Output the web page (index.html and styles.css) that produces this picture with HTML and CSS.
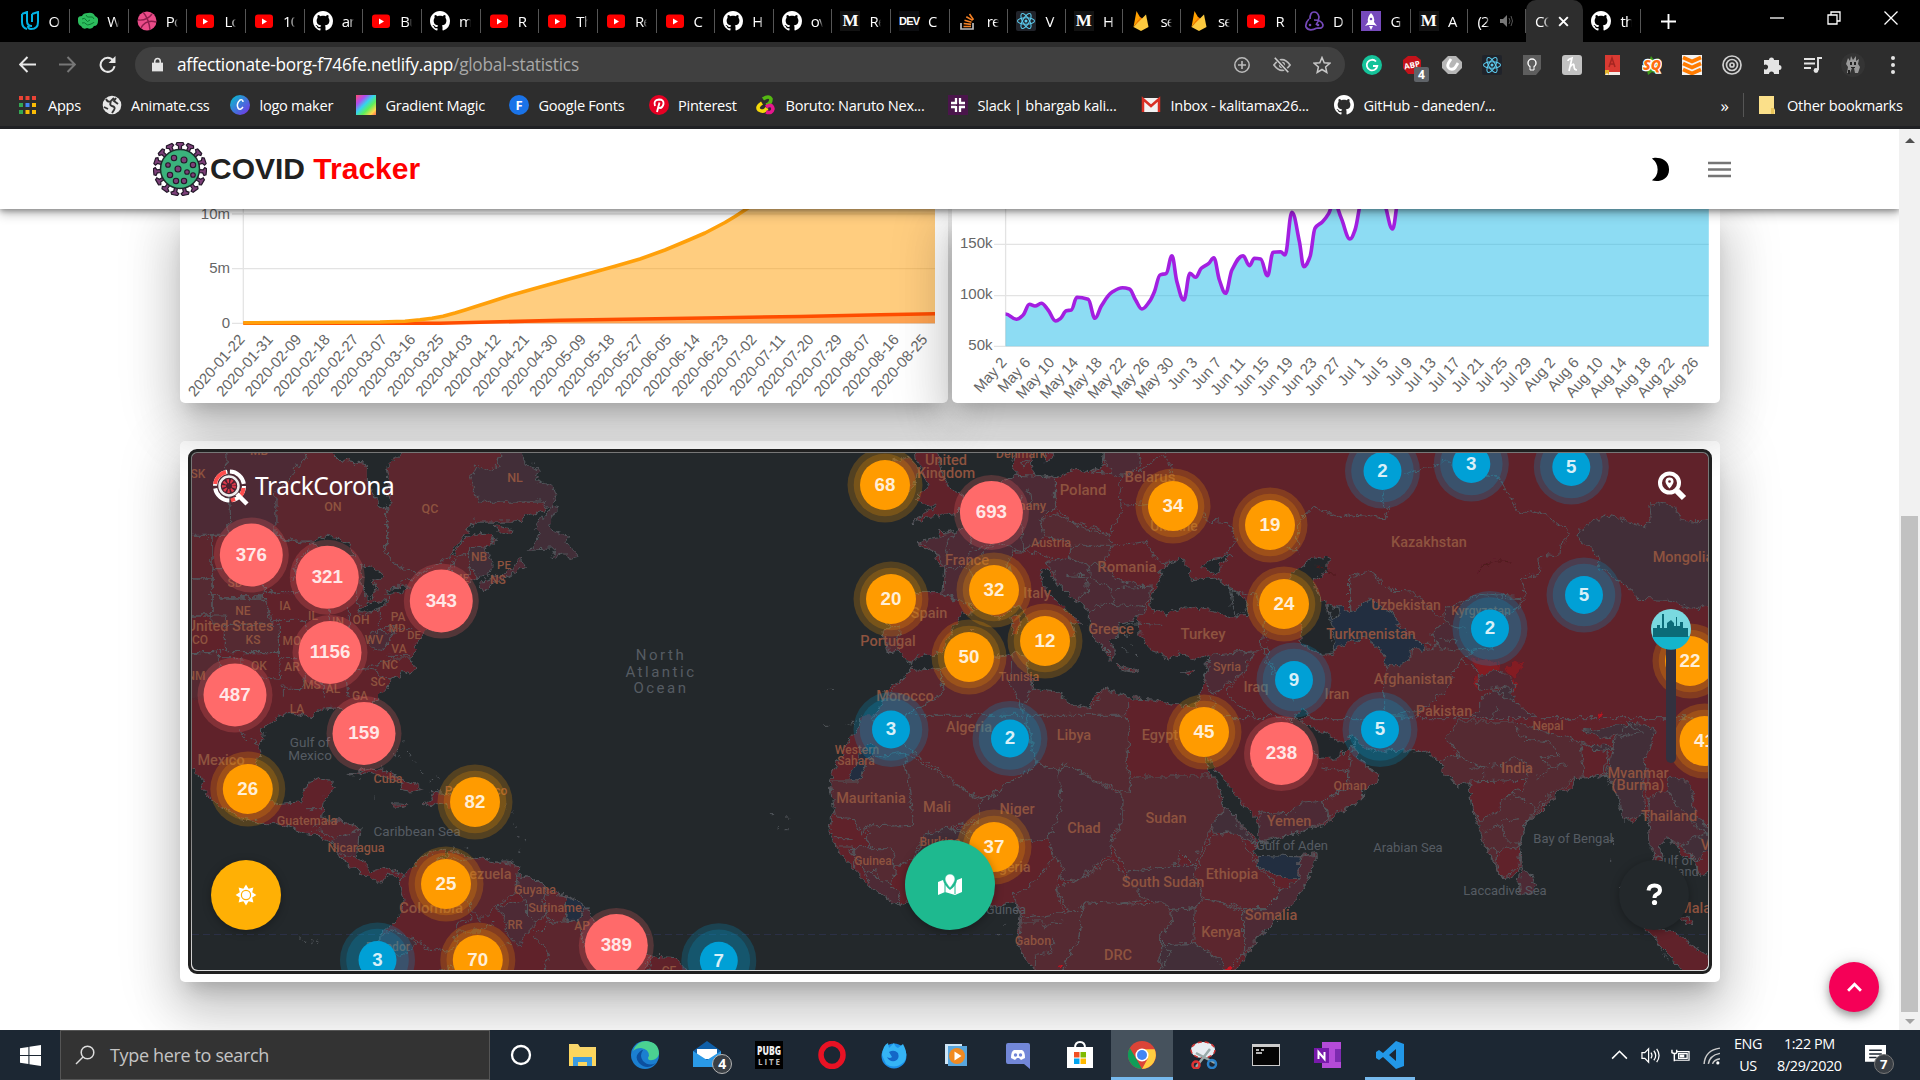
FILE: index.html
```html
<!DOCTYPE html>
<html lang="en">
<head>
<meta charset="utf-8">
<title>COVID Tracker</title>
<link rel="stylesheet" href="styles.css">
</head>
<body>
<svg class="sprite" aria-hidden="true">
  <symbol id="udacity" viewBox="0 0 20 20"><path d="M2 3v8q0 6 5 7M2 3l5-2v9q0 5 5 5M12 3l6-2v10q0 7-7 7-3 0-3-3M12 3v8" fill="none" stroke="#02b3e4" stroke-width="2"/></symbol>
  <symbol id="brain" viewBox="0 0 20 20"><path d="M0 10q-1-5 4-5 1-3 6-3 5-1 7 3 4 2 3 5 0 5-4 5-2 4-7 2-4 2-6-2-3-1-3-5z" fill="#2dbd5e"/><path d="M4 8q3-2 4 1t4 0 M8 4q1 3 4 2t4 2M4 12q3-1 4 1t5 0 3-2" fill="none" stroke="#0b7b32" stroke-width="1"/></symbol>
  <symbol id="dribbble" viewBox="0 0 20 20"><circle cx="10" cy="10" r="9.500" fill="#ea4c89"/><path d="M1 9q9 1 14-6M6 1q6 7 7 18M4 17q5-9 15-6" fill="none" stroke="#8d1d4c" stroke-width="1.400"/></symbol>
  <symbol id="yt" viewBox="0 0 20 20"><rect x="1" y="3.500" width="18" height="13.500" rx="3" fill="#f00"/><path d="M8 7.500l5 3-5 3z" fill="#fff"/></symbol>
  <symbol id="github" viewBox="0 0 16 16"><path fill="#fff" d="M8 0C3.580 0 0 3.580 0 8c0 3.540 2.290 6.530 5.470 7.590.4.070.55-.17.55-.38 0-.19-.01-.82-.01-1.490-2.010.37-2.530-.49-2.690-.94-.09-.23-.48-.94-.82-1.130-.28-.15-.68-.52-.01-.53.63-.01 1.080.58 1.230.82.72 1.210 1.870.87 2.330.66.070-.52.28-.87.51-1.070-1.780-.2-3.640-.89-3.640-3.950 0-.87.31-1.590.82-2.150-.08-.2-.36-1.020.08-2.120 0 0 .67-.21 2.200.82.64-.18 1.320-.27 2-.27s1.360.09 2 .27c1.530-1.040 2.200-.82 2.200-.82.44 1.100.16 1.920.08 2.120.51.56.82 1.270.82 2.150 0 3.070-1.870 3.750-3.650 3.950.29.25.54.73.54 1.480 0 1.070-.01 1.930-.01 2.200 0 .21.15.46.55.38A8.010 8.010 0 0 0 16 8c0-4.420-3.580-8-8-8z"/></symbol>
  <symbol id="so" viewBox="0 0 20 20"><path d="M3 12v6h12v-6" fill="none" stroke="#bcbbbb" stroke-width="1.700"/><path d="M5.500 15.500h7.500M5.700 12.500l7.400.9M6.500 9.200l7 2M8.300 5.700l6.300 3.700M11.500 3l4 5.800" stroke="#f48024" stroke-width="1.600"/></symbol>
  <symbol id="react" viewBox="0 0 20 20"><rect width="20" height="20" rx="2" fill="#20232a"/><g fill="none" stroke="#5ccbee" stroke-width="1.100"><ellipse cx="10" cy="10" rx="8.500" ry="3.300"/><ellipse cx="10" cy="10" rx="8.500" ry="3.300" transform="rotate(60 10 10)"/><ellipse cx="10" cy="10" rx="8.500" ry="3.300" transform="rotate(120 10 10)"/></g><circle cx="10" cy="10" r="1.500" fill="#5ccbee"/></symbol>
  <symbol id="firebase" viewBox="0 0 20 20"><path d="M2.500 16L5.500 0l4 7z" fill="#ffa000"/><path d="M2.500 16L9.500 6l3 3z" fill="#f57c00"/><path d="M2.500 16L15 3.500l2.500 12.500-7.500 4z" fill="#fcca3f"/></symbol>
  <symbol id="redux" viewBox="0 0 20 20"><g fill="none" stroke="#764abc" stroke-width="1.700"><path d="M6 8q0-7 4-7t5 5q0 4-3 8M5 8q-4 4-3 8 3 5 11 1M13 17q6 1 6-3-1-5-9-5"/></g><circle cx="6" cy="14" r="1.300" fill="#764abc"/><circle cx="14" cy="14" r="1.300" fill="#764abc"/></symbol>
  <symbol id="rocket" viewBox="0 0 20 20"><path fill="#764abc" d="M0 0h20v20H0z"/><path d="M10 2q4 4 3 9l3 4-3-1H7l-3 1 3-4q-1-5 3-9zM8 15h4l-2 4z" fill="#fff"/><circle cx="10" cy="8" r="1.300" fill="#764abc"/></symbol>
  <symbol id="chrome" viewBox="0 0 24 24"><circle cx="12" cy="12" r="12" fill="#db4437"/><path d="M1.600 6L8 17l4 7A12 12 0 0 1 1.600 6z" fill="#0f9d58"/><path d="M12 7h10.800A12 12 0 0 1 12 24l5-9z" fill="#ffcd40"/><circle cx="12" cy="12" r="5.600" fill="#fff"/><circle cx="12" cy="12" r="4.300" fill="#4285f4"/></symbol>
</svg>

<header class="tabs">
  <div class="tab"><svg><use href="#udacity"/></svg><span>O</span></div>
  <div class="tab"><svg><use href="#brain"/></svg><span>W</span></div>
  <div class="tab"><svg><use href="#dribbble"/></svg><span>Po</span></div>
  <div class="tab"><svg><use href="#yt"/></svg><span>Lo</span></div>
  <div class="tab"><svg><use href="#yt"/></svg><span>10</span></div>
  <div class="tab"><svg><use href="#github"/></svg><span>an</span></div>
  <div class="tab"><svg><use href="#yt"/></svg><span>Bu</span></div>
  <div class="tab"><svg><use href="#github"/></svg><span>m</span></div>
  <div class="tab"><svg><use href="#yt"/></svg><span>R</span></div>
  <div class="tab"><svg><use href="#yt"/></svg><span>Th</span></div>
  <div class="tab"><svg><use href="#yt"/></svg><span>Re</span></div>
  <div class="tab"><svg><use href="#yt"/></svg><span>C</span></div>
  <div class="tab"><svg><use href="#github"/></svg><span>H</span></div>
  <div class="tab"><svg><use href="#github"/></svg><span>ov</span></div>
  <div class="tab"><b class="fav medium">M</b><span>Re</span></div>
  <div class="tab"><b class="fav dev">DEV</b><span>C</span></div>
  <div class="tab"><svg><use href="#so"/></svg><span>re</span></div>
  <div class="tab"><svg><use href="#react"/></svg><span>V</span></div>
  <div class="tab"><b class="fav medium">M</b><span>H</span></div>
  <div class="tab"><svg><use href="#firebase"/></svg><span>se</span></div>
  <div class="tab"><svg><use href="#firebase"/></svg><span>se</span></div>
  <div class="tab"><svg><use href="#yt"/></svg><span>R</span></div>
  <div class="tab"><svg><use href="#redux"/></svg><span>D</span></div>
  <div class="tab"><svg><use href="#rocket"/></svg><span>G</span></div>
  <div class="tab"><b class="fav medium">M</b><span>A</span></div>
  <div class="tab sound"><span>(2)</span><svg viewBox="0 0 14 14"><path d="M1 5h3l4-4v12L4 9H1z" fill="#777"/><path d="M10 4q2 3 0 6M12 2q3 5 0 10" fill="none" stroke="#555"/></svg></div>
  <div class="tab active"><span>CO</span><svg viewBox="0 0 12 12"><path d="M2 2l8 8M10 2l-8 8" stroke="#fff" stroke-width="1.800"/></svg></div>
  <div class="tab"><svg><use href="#github"/></svg><span>th</span></div>
  <div class="new-tab"><svg viewBox="0 0 16 16"><path d="M8 0v16M0 8h16" stroke="#fff" stroke-width="2"/></svg></div>
  <div class="window-buttons">
    <svg viewBox="0 0 14 14"><path d="M0 7h14" stroke="#fff" stroke-width="1.300"/></svg>
    <svg viewBox="0 0 14 14"><path d="M1 4h9v9H1zM4 4V1h9v9h-3" fill="none" stroke="#fff" stroke-width="1.300"/></svg>
    <svg viewBox="0 0 14 14"><path d="M.5.5l13 13M13.500.5l-13 13" stroke="#fff" stroke-width="1.300"/></svg>
  </div>
</header>

<div class="toolbar">
  <div class="nav-buttons">
    <svg viewBox="0 0 16 16"><path d="M16 8H1M8 1L1 8l7 7" fill="none" stroke="#e8e8e8" stroke-width="1.900"/></svg>
    <svg viewBox="0 0 16 16"><path d="M0 8h15M8 1l7 7-7 7" fill="none" stroke="#777" stroke-width="1.900"/></svg>
    <svg viewBox="0 0 16 16"><path d="M13.500 4.500A6.600 6.600 0 1 0 14.600 9.500" fill="none" stroke="#e8e8e8" stroke-width="1.900"/><path d="M15.500 0v6.500H9z" fill="#e8e8e8"/></svg>
  </div>
  <div class="omnibox">
    <svg class="lock" viewBox="0 0 12 15"><path d="M0 5.500h12V15H0z" fill="#e3e3e3"/><path d="M3 6V4a3 3 0 0 1 6 0v2" fill="none" stroke="#e3e3e3" stroke-width="1.700"/></svg>
    <p class="url">affectionate-borg-f746fe.netlify.app<span>/global-statistics</span></p>
    <div class="omni-actions">
      <svg viewBox="0 0 18 18"><circle cx="9" cy="9" r="7.200" fill="none" stroke="#bbb" stroke-width="1.500"/><path d="M9 5v8M5 9h8" stroke="#bbb" stroke-width="1.600"/></svg>
      <svg viewBox="0 0 20 18"><path d="M1 9q9-12 18 0-9 12-18 0z" fill="none" stroke="#bbb" stroke-width="1.900"/><circle cx="10" cy="9" r="3.500" fill="#bbb"/><path d="M3 1l14 16" stroke="#404040" stroke-width="4"/><path d="M2 1l15 16" stroke="#ccc" stroke-width="1.800"/></svg>
      <svg viewBox="0 0 18 18"><path d="M9 1.500l2.200 5.200 5.600.5-4.200 3.700 1.200 5.500L9 13.500l-4.800 2.900 1.200-5.500L1.200 7.200l5.600-.5z" fill="none" stroke="#c8c8c8" stroke-width="1.500"/></svg>
    </div>
  </div>
  <div class="extensions">
    <svg viewBox="0 0 20 20"><circle cx="10" cy="10" r="10" fill="#15c39a"/><path d="M14 6.500A5.300 5.300 0 1 0 15.300 11H11" fill="none" stroke="#fff" stroke-width="1.800"/></svg>
    <div class="ext-badge"><svg viewBox="0 0 20 20"><path d="M6 1h8l5 4v8l-5 6H6l-5-6V5z" fill="#c4121a"/><text x="10" y="13" text-anchor="middle" font-size="8" font-weight="700" fill="#fff" transform="rotate(-12 10 10)">ABP</text></svg><b>4</b></div>
    <svg viewBox="0 0 20 20"><path d="M6 1h8l6 6v6l-6 6H6l-6-6V7z" fill="#b6b6b6"/><path d="M9 4L6.500 8q-2 4 1.500 6 4 1 5.500-2L16 8" fill="none" stroke="#fff" stroke-width="2.800"/></svg>
    <svg><use href="#react"/></svg>
    <svg viewBox="0 0 20 20"><path d="M1 0h18v14l-5 6H1z" fill="#5e5e5e"/><circle cx="10" cy="8" r="4" fill="none" stroke="#fff" stroke-width="1.400"/><path d="M8 11v4h4v-4" fill="#5e5e5e" stroke="#fff"/></svg>
    <svg viewBox="0 0 20 20"><rect width="20" height="20" rx="3" fill="#c2c2c2"/><path d="M7 16q2-8 3-13-4 1-4 3M8 12q4-5 4-1t3 4" fill="none" stroke="#fff" stroke-width="1.700"/></svg>
    <svg viewBox="0 0 20 20"><path d="M3 0h15v17H3z" fill="#d93a32"/><path d="M3 17h15v3H3z" fill="#f3eee8"/><path d="M7 12l3-9 3 9M8 9h4" fill="none" stroke="#a32520" stroke-width="1.500"/><path d="M3 15h4v5l-2-2-2 2z" fill="#e3b32e"/></svg>
    <svg viewBox="0 0 20 20"><path d="M4 4l3 2 2-5 3 4 5-2-1 6 3 3-4 2v5l-5-2-4 3-1-5-4-2 3-4z" fill="#3d9b1d"/><text x="10" y="15" text-anchor="middle" font-size="14" font-weight="800" font-style="italic" fill="#ff6d10" stroke="#fff" stroke-width="2.500" paint-order="stroke">SQ</text></svg>
    <svg viewBox="0 0 20 20"><path d="M0 0h20v20H0z" fill="#f3f3f3"/><path d="M1 2.500l9 4 9-4M1 8.500l9 4 9-4M1 14.500l9 4 9-4" fill="none" stroke="#ff7b00" stroke-width="3.600"/></svg>
    <svg viewBox="0 0 20 20" fill="none" stroke="#cfcfcf" stroke-width="1.700"><circle cx="10" cy="10" r="9"/><circle cx="10" cy="10" r="5.500"/><circle cx="10" cy="10" r="2"/></svg>
    <svg viewBox="0 0 20 20"><path d="M2 5h5a2.500 2.500 0 1 1 5 0h5v5a2.500 2.500 0 1 1 0 5v4h-5a2.500 2.500 0 1 0-5 0H2v-5a2.500 2.500 0 1 0 0-4z" fill="#e4e4e4"/></svg>
    <svg viewBox="0 0 20 20"><path d="M1 4h11M1 8.500h11M1 13h7" stroke="#e4e4e4" stroke-width="1.800"/><path d="M15 15V3h4" fill="none" stroke="#e4e4e4" stroke-width="1.900"/><circle cx="13" cy="15.500" r="2.400" fill="#e4e4e4"/></svg>
    <svg class="avatar" viewBox="0 0 24 24"><circle cx="12" cy="12" r="12" fill="#343434"/><path d="M7 5l2 3 1-5 2 4 3-4v5l3-2-1 5 2 3-2 6h-3l-1-5h-2l-2 5H6l1-6-2-3z" fill="#999"/><path d="M9 9h2v3H9zM13 9h2v3h-2zM10 14h4v1h-4zM7 17h2v4H7z" fill="#222"/></svg>
    <svg viewBox="0 0 20 20"><circle cx="10" cy="3" r="2" fill="#e4e4e4"/><circle cx="10" cy="10" r="2" fill="#e4e4e4"/><circle cx="10" cy="17" r="2" fill="#e4e4e4"/></svg>
  </div>
</div>

<div class="bookmarks">
  <div class="bookmark"><svg viewBox="0 0 17 18"><path d="M0 0h4v4H0zM6.500 0h4v4h-4zM13 0h4v4h-4z" fill="#ea4335"/><path d="M0 7h4v4H0zM0 14h4v4H0z" fill="#34a853"/><path d="M6.500 7h4v4h-4z" fill="#4285f4"/><path d="M13 7h4v4h-4zM6.500 14h4v4h-4zM13 14h4v4h-4z" fill="#fbbc05"/></svg><span>Apps</span></div>
  <div class="bookmark"><svg viewBox="0 0 20 20"><circle cx="10" cy="10" r="9.300" fill="#e8e8e8"/><path d="M4 4q2 4 5 2l3-3M9 7q-2 3 1 4 4 1 2 4l-2 3M2 12l4 2M14 3l-2 3 4 3" fill="none" stroke="#333" stroke-width="1.900"/></svg><span>Animate.css</span></div>
  <div class="bookmark"><svg viewBox="0 0 20 20"><defs><linearGradient id="cv" x2="1" y2="1"><stop stop-color="#00c4cc"/><stop offset="1" stop-color="#7d2ae8"/></linearGradient></defs><circle cx="10" cy="10" r="10" fill="url(#cv)"/><path d="M13 7q0-3-3-2-4 4-2 8 2 3 5-1" fill="none" stroke="#fff" stroke-width="1.500"/></svg><span>logo maker</span></div>
  <div class="bookmark"><i class="fav rainbow"></i><span>Gradient Magic</span></div>
  <div class="bookmark"><b class="fav gfonts">F</b><span>Google Fonts</span></div>
  <div class="bookmark"><svg viewBox="0 0 20 20"><circle cx="10" cy="10" r="10" fill="#e60023"/><path d="M6 11q-2-6 4-6.500 5 0 4.500 4.500-1 4-3.500 4-1.500 0-2-1.500M10.500 7.500L8 17" fill="none" stroke="#fff" stroke-width="1.900"/></svg><span>Pinterest</span></div>
  <div class="bookmark"><svg viewBox="0 0 20 20" fill="none" stroke-width="3.600"><path d="M7 4q6-4 8 0 0 5-5 6" stroke="#54b812"/><path d="M6 8q-6 4-3 7 5 3 8-2" stroke="#f5d90a"/><path d="M10 12q6-4 7 2-1 5-7 3" stroke="#e6168e"/></svg><span>Boruto: Naruto Nex...</span></div>
  <div class="bookmark"><svg viewBox="0 0 20 20"><path d="M0 0h20v20H0z" fill="#4a154b"/><path d="M8 3v6M3 8h6M12 3v5M11 8h6M8 11v6M3 12h5M12 11v6M11 12h6" stroke="#fff" stroke-width="2.300"/></svg><span>Slack | bhargab kali...</span></div>
  <div class="bookmark"><svg viewBox="0 0 20 20"><path d="M1 3h18v14H1z" fill="#f2f2f2"/><path d="M2 17V4l8 7 8-7v13" fill="none" stroke="#d93025" stroke-width="2.500"/></svg><span>Inbox - kalitamax26...</span></div>
  <div class="bookmark"><svg><use href="#github"/></svg><span>GitHub - daneden/...</span></div>
  <div class="bookmark more"><span>»</span></div>
  <div class="bookmark other"><svg viewBox="0 0 16 18"><path d="M0 0h15v12l1 2v4H0z" fill="#fbe08a"/><path d="M12 12h3v6h-3z" fill="#eac55a"/></svg><span>Other bookmarks</span></div>
</div>

<div class="viewport">
  <div class="page">
    <nav class="navbar">
      <svg class="virus" viewBox="-27 -27 54 54"><g id="spikes" fill="#7c3f78" stroke="#24182a" stroke-width="1.200"></g><circle r="19.500" fill="#3bb27c" stroke="#1d2b2a" stroke-width="1.500"/><g fill="#7c3f78" stroke="#24182a" stroke-width="1.100"><circle cx="-6" cy="-11" r="2.700"/><circle cx="4" cy="-9" r="3"/><circle cx="-12" cy="-4" r="2.300"/><circle cx="-2" cy="0" r="3"/><circle cx="13" cy="-4" r="2.700"/><circle cx="7" cy="3" r="2.300"/><circle cx="-10" cy="6" r="2.700"/><circle cx="13" cy="6" r="2.300"/><circle cx="-4" cy="12" r="2.700"/><circle cx="4" cy="12" r="2.700"/></g></svg>
      <h1>COVID <span>Tracker</span></h1>
      <svg class="moon" viewBox="0 0 20 26"><path d="M1 1.500C5-.5 19 1 19 13S6 26.500 1 24.300Q7 20 7 13T1 1.500z" fill="#000"/></svg>
      <svg class="menu" viewBox="0 0 23 16"><path d="M0 1.500h23M0 8h23M0 14.500h23" stroke="#757575" stroke-width="2.400"/></svg>
    </nav>
    <div class="charts">
      <svg class="card" id="totals" viewBox="180 209 768 194"></svg>
      <svg class="card" id="daily" viewBox="952 209 768 194"></svg>
    </div>
    <section class="map-card">
      <div class="embed">
        <svg class="map" viewBox="192 453 1516 517">
          <defs><filter id="rough" x="0" y="0" width="1" height="1"><feTurbulence baseFrequency=".09" numOctaves="3" seed="4" result="n"/><feDisplacementMap in="SourceGraphic" in2="n" scale="8" xChannelSelector="R" yChannelSelector="G"/></filter></defs>
          <rect x="192" y="453" width="1516" height="517" fill="#23282b"/>
          <path d="M192 934.500h1516" stroke="#2b3046" stroke-dasharray="7 4"/>
          <g filter="url(#rough)"><rect x="185" y="445" width="1530" height="535" fill="none"/>
          <g class="land" transform="translate(180 440) scale(.33333)">
            <path class="c1" d="M20 800V20H440L480 60 553 70 553 120 575 170 600 195 628 205 630 180 612 150 622 120 612 80 665 55 672 20H960L950 75 1000 110 950 180H1090V205L1010 240H880L860 270 820 310 795 352 820 335 840 300 875 280 935 275 942 300 915 312 925 395 885 412 850 430 800 520 750 560 722 575 700 605 700 640 685 650 702 675 690 690 650 705 630 715 600 750 580 780V800"/>
            <path class="c4" d="M20 20H134L145 280H20z"/><path class="c4" d="M134 20H390L282 160V280H145z"/>
            <path class="c2" d="M282 160L390 20H440L480 60 553 70V120L600 195 614 205V330L632 362 690 392H722L640 440 600 500 540 520 500 380 440 300 340 300 282 280z"/>
            <path class="c2" d="M614 205L630 180 612 80 672 20H960L950 75 870 110 890 170 940 190 950 180H1090V205L1010 240H880L795 352 722 392H690L632 362 614 330z"/>
            <path class="c5" d="M865 110L885 70 905 90 950 75 960 20H1015L1030 70 1060 75 1085 90 1060 110 1110 130 1122 160 1110 195 1090 200V180H950L935 195 920 175 895 185 875 140z"/>
            <path class="c2" d="M20 280H90V408H20zM90 380H250V468H90z"/><path class="c3" d="M20 408H90V522H20zM90 468H250L270 550H90zM130 550H292V632H130zM20 632H112V800H20z"/>
            <path class="c4" d="M560 590L592 560 610 575 640 565 600 625 575 620z"/>
            <path class="c5" d="M862 320L915 314 930 370 925 395 885 410 862 370z"/><path class="c2" d="M805 390L820 345 862 330V400L840 430z"/>
            <path class="c5" d="M1110 195L1130 200 1100 250 1110 265 1160 280 1150 300 1180 320 1185 350 1165 355 1150 335 1110 350 1120 320 1045 325 1075 280 1060 265 1085 225z"/>
            <path class="c4" d="M897 430L910 415 960 400 1000 375 1015 345 1030 375 985 400 930 430 905 450z"/><path class="c2" d="M935 250L990 265 985 280 950 268z"/>
            <path class="sea" d="M390 305L430 285 470 290 500 310 520 340 440 340zM535 375L570 372 605 400 600 415 575 410 585 440 560 480 545 440zM530 505L560 485 622 475 600 495 560 508zM610 450L640 437 685 435 675 450 620 458z"/>
            <path class="line" d="M90 280V522M20 408H90M90 380H250V468M90 468H240L270 520 275 560M20 522H130V632M130 550H250M20 632H292M292 560V632L296 715M112 632V647H177V700L296 715M250 452H360M275 535H370L385 600 400 640M442 500V700M502 500V600L440 650M592 495V560H690M296 650H380L360 740 304 738V800M424 700V790M490 690L500 780M424 690H520L640 648H690M540 685L580 690 630 715M282 280L330 300 390 305M330 420L350 350 390 320M614 640H690M600 625L640 570"/>
          </g>
          <g class="land" transform="translate(180 700) scale(.3827 .33333)">
            <path class="c1" d="M500-10L505 20 470 100 440 30 400 18 360 22 340 50 300 35 270 35 240 55 215 80 205 135 200 190 190 230 200 290 245 305 310 300 330 245 360 232 398 235 395 260 375 290 370 350 430 360 465 380 455 465 475 480 500 510 540 500 575 520 578 545 555 515 535 515 515 548 490 520 470 520 455 500 425 480 415 455 385 415 355 405 300 385 250 365 220 365 150 350 75 290 50 260 55 230 10 185V-10"/>
            <path class="c4" d="M400 410L465 380 455 465 425 460 388 418z"/><path class="c2" d="M355 385L375 362 430 360 465 380 400 410 380 395z"/>
            <path class="c1" d="M440 220L480 200 530 205 575 235 630 262 600 270 570 265 575 250 530 225 490 210zM555 305L595 308 590 318 560 315zM630 305L650 295 655 270 690 275 730 300 700 320 680 310 660 312z"/>
            <path class="line" d="M560 150l10 20M575 115l8 12M590 145l8 15M605 180l8 12M625 205l10 10M650 240l8-8M665 225l8 8M845 310l4 12M862 325v10M870 370v8M880 405v8M905 420v5M880 440l-4 12M710 435l6 12M740 440l4 8M800 470h8M470 225l3 10M500 285h4M1540 335h6M1558 375v12M310 705l14 18M335 722h6M350 715l3 5M320 320H370M330 395L355 365M200 130L170 110 150 80"/>
            <path class="c1" d="M520 820L515 740 525 690 550 665 575 635 580 600 570 540 600 500 625 465 685 438 690 455 665 480 690 475 700 445 760 470 800 480 850 480 880 490 875 520 905 525 950 560 1000 580 1045 600 1060 615 1070 650 1100 690 1225 765 1290 770 1330 820"/>
            <path class="c2" d="M665 480L760 470 880 490 875 565 820 615 780 660 750 600 690 580z"/>
            <path class="c4" d="M880 530L905 525 950 560 940 595 955 640 925 665 900 640 895 595 875 565z"/><path class="c2" d="M945 575L1000 580 1010 600 1000 655 955 660z"/><path class="c6" d="M1005 585L1045 600 1060 615 1035 655 1003 655z"/>
            <path class="c4" d="M820 615L900 595 900 640 930 665 900 700 880 735 840 690 850 665z"/><path class="c4" d="M1035 655L1060 615 1070 650 1095 690 1050 730z"/>
            <path class="c5" d="M545 680L600 710 610 730 580 760 520 770 515 720z"/>
            <path class="c2" d="M960 665L1035 655 1050 730 1090 700 1225 765 1200 820H940L965 750 920 710z"/>
            <path class="line" d="M750 600L755 650 715 670 720 740 690 750 640 740 600 705M720 690L780 690 820 660M665 810L720 795 860 720M1215 810L1230 770"/>
          </g>
          <g class="land" transform="translate(780 440) scale(.33333)">
            <path class="c1" d="M240 860L290 810 300 790 320 740 370 705 385 680 390 662 368 650 350 625 320 635 308 590 325 560 295 470 318 445 400 452 480 452 485 380 460 350 465 330 420 320 405 300 480 290 470 265 505 285 520 270 545 255 600 200 640 140 690 125 715 105 690 80 700 20H2850V860"/>
            <path class="c4" d="M405 300L480 285 520 270 560 250 700 320 680 360 690 440 600 490 545 485 485 460 490 380 465 330z"/>
            <path class="c4" d="M640 140L700 100 820 105 822 190 775 235 790 290 725 330 640 300 590 240 600 200z"/>
            <path class="c3" d="M775 235L825 215 900 260 985 280 990 310 920 370 870 345 865 300 790 290z"/>
            <path class="c4" d="M800 365L860 345 920 370 970 365 1000 410 1110 440 1095 500 1075 530 1010 545 1012 590 1000 655 960 615 925 570 925 510 880 475 830 430z"/>
            <path class="c3" d="M860 345L880 310 985 310 970 370 920 370z"/>
            <path class="c4" d="M962 20L965 60 1000 105 1040 100 1075 70 1070 20z"/>
            <path class="c3" d="M308 560H355L345 620 320 635z"/>
            <path class="c2" d="M240 860L300 790 385 680 475 680 485 755 370 820 360 860z"/><path class="c2" d="M475 680L690 635 715 800 760 860H360L370 820 485 755z"/>
            <path class="c4" d="M690 635L750 640 735 690 755 740 720 805 685 720z"/><path class="c3" d="M750 740L820 750 930 800 970 740 1040 770V860H720V805z"/>
            <path class="c4" d="M1280 640L1415 630 1390 690 1290 760 1270 730z"/>
            <path class="sea" d="M390 660L420 640 475 640 490 610 515 560 540 520 575 515 560 487 600 510 650 530 690 500 715 490 735 530 790 570 850 600 880 575 870 540 903 550 850 505 785 435 775 385 800 385 830 430 880 475 925 510 925 570 960 615 985 655 1000 640 985 600 1012 590 1010 545 1075 530 1065 550 1085 600 1110 625 1150 640 1160 655 1200 635 1240 655 1280 640 1278 680 1255 760 1240 795 1170 790 1125 775 1040 770 970 740 935 770 930 800 880 790 820 750 750 740 755 710 735 690 750 640 690 635 610 642 550 655 475 680 400 685 385 672z"/>
            <path class="sea" d="M1190 350L1150 372 1130 420 1105 480 1115 505 1155 518 1210 495 1290 505 1350 525 1398 520 1400 490 1365 450 1300 405 1255 410 1225 415 1222 380zM1255 375L1290 350 1350 340 1310 370 1320 385 1290 398zM745 20L750 80 760 105 800 100 825 105 880 85 925 95 960 75 965 20z"/>
            <path class="c1" d="M405 20L410 60 425 95 440 130 400 180 460 195 390 245 450 225 520 215 545 190 548 160 510 145 480 100 470 20z"/><path class="c3" d="M340 60L385 45 410 90 385 150 340 150z"/>
            <path class="c1" d="M690 530L715 520 712 575 695 580zM800 610L850 600 840 640zM935 90L960 72 995 80 990 95zM790 36L812 40 812 60 790 62zM720 60l20-5 2 15-20 5zM1012 672L1070 685 1068 690 1015 680zM1200 690L1238 682 1220 697zM570 560l14 2-8 8zM1020 580l20 4M1040 600l12 12M1060 640l10 10M1020 620l20 10M1030 550l15-5M1075 570l10 10"/>
            <path class="line" d="M820 105V190L865 240 985 275 1020 210 1010 160 1020 100M1040 100L1150 40 1170 90M1020 190L1100 185 1180 200M1265 215L1270 240 1340 245 1365 290 1330 340M990 310L1090 300 1130 360 1150 372M1000 440L1110 435M850 400L915 405 920 450 880 475M920 370L930 410 990 440 1000 490 950 490 925 510M1000 490L1090 500M725 330L720 250 640 140M690 330L725 330 810 345 800 370M480 452L545 485M640 300L560 330 570 420M490 380L560 380M560 250L570 310M520 270L500 300 490 340M640 300L600 340M640 200L700 190 720 160M740 140L750 190 800 210M700 220L680 270M415 460L320 460M1365 450L1420 460 1450 510 1440 620 1480 700M1140 550L1040 545M1390 690L1340 740V765L1430 830 1550 835M1280 765L1300 790 1250 860M145 742h8M130 850h15M210 850l10-15M190 853l15-5"/>
          </g>
          <g class="land" transform="translate(1230 440) scale(.33333)">
            <path class="c5" d="M1035 275L1080 240 1130 222 1240 255 1255 230 1250 200 1272 178 1330 200 1345 230 1380 240 1460 235V485L1390 505 1310 475 1215 472 1190 430 1130 395 1100 390V350L1085 320 1050 300z"/>
            <path class="c2" d="M353 405L410 390 455 425 480 448 550 450 580 480 620 530 650 500 700 505 640 540 600 575 615 610 578 610 520 570 475 510 410 475 353 515z"/>
            <path class="c3" d="M465 670L535 650 540 625 600 620 650 600 730 625 690 650 640 750 580 800 545 825H455V720z"/>
            <path class="c4" d="M640 500L740 460 865 470 860 495 800 540 790 620 700 630 620 620 600 575 640 540z"/>
            <path class="c6" d="M285 550L295 500 320 490 350 515 375 500 410 475 475 510 520 570 578 610 570 628 535 625 530 650 490 678 465 670 455 635 400 590 350 605 312 625 300 560z"/>
            <path class="sea" d="M200 380L250 345 292 350 290 385 245 420 260 470 285 490 300 560 312 635 275 640 205 605 210 560 170 480 160 420zM290 500L320 495 325 520 300 530zM-5 440L40 470 50 500 10 525zM185 820L215 800 245 840 260 880H220z"/>
            <path class="hot" d="M712 645L800 665 800 692 740 697zM825 680L850 660 872 668 868 690 850 710zM728 700h10v35h-8zM845 715h10v35h-8z"/><path class="c4" d="M738 700L822 692 850 720V750L800 735 740 745z"/>
            <path class="c5" d="M780 745L840 740 850 780 810 800zM1060 860L1120 865 1200 828 1240 860 1250 900H1060z"/><path class="c4" d="M740 780L790 745 860 785 910 830 890 870H660L740 810z"/>
            <path class="line" d="M165 320L200 330 200 240 240 195 330 230 380 220 460 230 470 200 445 180 460 150M520 100L640 60 700 100 795 100 865 220 890 205 950 225 1020 280 985 310 980 345 930 340 920 400 865 410 880 460 865 495 800 540M100 560L110 640 150 720 190 790M0 630L110 625M353 405V515M455 825L580 800M910 830L1000 865 1060 860M690 650L740 690M760 860L800 790M640 540L660 560 700 565M620 590L680 600"/>
            <path d="M735 390q30-45 100-30M735 395l5-10M250 370l60 30" fill="none" class="ridge"/>
            <circle cx="1104" cy="820" r="6" fill="#b81420"/>
          </g>
          <g class="land" transform="translate(1230 720) scale(.4415 .33333)">
            <path class="c1" d="M-60-10H1110V440L1060 460 1050 420 1020 400 1010 370 985 350 970 370 975 420 1000 520 985 500 960 440 945 310 935 275 910 300 890 300 880 240 865 200 850 160 775 170 770 195 740 215 700 270 665 300 652 370 655 430 640 460 615 470 600 440 575 380 560 305 545 270 540 200 535 175 510 195 480 150 475 120 460 110 435 85 340 90 300 80 280 40 275 70 300 130 330 155 328 180 298 205 298 230 275 250 210 305 110 350 65 365 55 290 30 260 0 200-60 100"/>
            <path class="c3" d="M480 150L475 115 510 100 490 50 510 0H640L790 60 850 90 830 165 775 170 740 215 665 300 652 370 615 470 575 380 545 270 540 180 510 195z"/>
            <path class="c1" d="M540 180L665 175V200L610 235V260L560 300 545 260zM600 390L655 370 650 430 615 470 598 420zM790 65L850 90 845 160 800 165z"/>
            <path class="c5" d="M865 60L900 0 960 20 940 100 930 180 935 275 890 300 870 200 850 160z"/><path class="c4" d="M940 230L985 210 1010 250 1070 300 1090 330 1020 370 985 350 970 370 975 420 950 380z"/>
            <path class="c5" d="M985 170L1020 170 1050 210 1040 250 1085 330 1110 360 1050 310 990 215zM815 70L860 75 855 88 820 85zM1020 370L1080 330 1090 380 1050 420z"/><path class="c5" d="M790 30L900 10 930 30 850 50z"/>
            <path class="c4" d="M65 270L130 275 160 240 205 235 220 290 180 318 110 350 65 365 58 340z"/><path class="c2" d="M205 235L262 200V150L275 75 300 130 330 155 328 180 298 205V230L275 250 220 285z"/>
            <path class="sea" d="M130-10H150L200 30 250 60 278 42 275 70 260 85 240 110 200 115 175 75 140 20z"/>
            <path class="c4" d="M655 437L675 450 688 490 680 510 655 515 650 480z"/><path class="c1" d="M920 600L1000 630 1040 670 1080 700 1085 760H1030L985 690zM1010 575L1048 600 1040 615z"/>
            <path class="line" d="M205 235L262 200V150L200 135M610 235L640 215 690 260 665 300M610 300L650 290M570 330L610 310 620 360 652 360M570 375L600 390M640 0L650 50 720 60 740 100 700 110 720 140 760 130M665 175L680 140 640 110 610 130 540 140M570 170V140L510 100M690 260L740 200M720 140L690 170M850 90L870 60M900 0L870 60 850 120M940 230V140M955 645l5 15M965 665l8 20M980 695l8 20M862 340v40M860 405v12M880 490v8"/>
          </g>
          <g class="land" transform="translate(780 720) scale(.33333)">
            <path class="c1" d="M240-20L225 30 200 60 165 130 145 180 160 250 140 325 155 360 200 430 270 500 350 552 420 530 560 540 640 555 700 545 715 590 705 640 710 680 775 765H1350L1400 690 1456 620 1555 520 1602 420V395L1520 405 1420 400 1430 365 1335 262 1300 190 1270 110V-20"/>
            <path class="c3" d="M145 180H232L250 110 370 93 395 310 260 315 240 340 215 290 160 285z"/><path class="c6" d="M200 175L235 100 262 60 280 80 250 120 232 178z"/>
            <path class="c2" d="M370 75L280 20V-20H712L735 0 765 125 635 222 600 230 580 225z"/>
            <path class="c3" d="M370 93L580 225 600 230V290L500 320 430 340 395 415 350 430 260 375V315L395 310z"/>
            <path class="c5" d="M430 340L500 320 590 340 560 370 480 400 395 415z"/><path class="c3" d="M200 380L330 380 345 440 330 500 290 470 240 440z"/><path class="c4" d="M240 440L290 470 350 510V552L270 500z"/>
            <path class="c4" d="M600 230L635 222 765 125 830 145 850 200 840 270 800 350 740 360 640 350 515 325 590 300z"/>
            <path class="c3" d="M765 125L735-20H1042V210H1020L850 130 830 145z"/>
            <path class="c4" d="M830 145L850 130 1020 218V305L990 340 985 400 900 470 840 480 815 430 800 350 840 270z"/>
            <path class="c3" d="M1042 165H1300L1330 260 1290 310 1240 430 1195 385 1190 430 1040 450 985 370 1020 300V210H1042z"/>
            <path class="c2" d="M820 400L845 440 820 500 855 600 715 590 700 520 750 490z"/>
            <path class="c3" d="M820 500L900 470 990 410 1090 535 1000 545 910 540 900 568 860 570z"/><path class="c4" d="M1040 450L1190 430 1240 430 1262 530 1235 560 1170 565 1090 530 1040 480z"/>
            <path class="c3" d="M910 540L1160 550 1175 590 1140 640 1135 765H835L890 650 900 568zM715 590L900 568 890 650 835 765H775L710 680z"/>
            <path class="c2" d="M1290 340L1370 330 1430 430 1500 510 1450 560 1380 560 1270 530 1240 460z"/><path class="c5" d="M1295 300L1335 262 1425 370 1370 335 1290 330z"/>
            <path class="c4" d="M1175 565L1255 560 1235 665 1140 668V640L1175 590z"/><path class="c2" d="M1240 555L1270 530 1385 570V690L1340 745 1235 665z"/><path class="c5" d="M1140 668L1235 665 1310 710 1350 765H1135z"/>
            <path class="c4" d="M1385 560L1450 560 1500 510 1555 470V405L1602 400V420L1555 520 1456 620 1385 700z"/><path class="c6" d="M1430 400L1555 405 1550 470 1505 470 1425 430z"/>
            <path class="line" d="M715 600L780 600 790 620 815 600 850 605M815 640V690L760 700V740M1140 668L1165 690 1140 740M155 350h60M160 372h55M200 385L215 375V440M260 460L280 440 290 470M340 430L370 425M500 320L560 350M1180 155v8M15 285h10M5 320h12M650 640v-6M668 608v-6M1360 310l8 4"/>
            <g fill="#c81420"><circle cx="834" cy="736" r="6"/><circle cx="1344" cy="741" r="9"/></g>
          </g></g>
          <g id="labels"></g><g id="markers"></g>
          <g class="brand"><circle cx="229.500" cy="486" r="14.500" fill="none" stroke="#fff" stroke-width="4" stroke-dasharray="20 2.770"/><path d="M215 484a14.500 14.500 0 0 1 11-12M243.500 488a14 14 0 0 1-4 9M235 499l-4 1.500" fill="none" stroke="#ff4d4d" stroke-width="4"/><circle cx="229" cy="486" r="9.500" fill="#4b2230" stroke="#eee" stroke-width="2.500"/><circle cx="229" cy="486" r="5" fill="none" stroke="#d9394a" stroke-width="4" stroke-dasharray="2 1.500"/><path d="M237 494l10 10" stroke="#fff" stroke-width="4.500"/><text x="255" y="495">TrackCorona</text></g>
          <g fill="none" stroke="#fff"><circle cx="1669.500" cy="483" r="9.500" stroke-width="4"/><path d="M1677 491l7 7" stroke-width="6"/><path d="M1669.500 488.500q-4-4.500-4-7a4 4 0 0 1 8 0q0 2.500-4 7z" fill="#fff" stroke="none"/><circle cx="1669.500" cy="481.500" r="1.300" fill="#60202b" stroke="none"/></g>
          <path d="M1671 640V758" stroke="#33313f" stroke-width="10" stroke-linecap="round"/><circle cx="1671" cy="629" r="20" fill="#7ad9e0"/><path d="M1652 636a20 20 0 0 0 38 0z" fill="#14b5cc"/><path d="M1653 637v-9h4v-3h3v3h2v-14h2v14h3v-5l4-3 3 3v3h2v-9h1v9h3v-4h3v6h5v9z" fill="#0b6b78"/>
          <g class="fabs"><circle cx="246" cy="895" r="35" fill="#ffb005"/><circle cx="950" cy="885" r="45" fill="#1eb98f"/><circle cx="1654" cy="895" r="35" fill="#23282b"/></g>
          <path d="M246 884.500l2.600 4.200 4.800-1.200-1.200 4.800 4.200 2.700-4.200 2.600 1.200 4.800-4.800-1.100-2.600 4.200-2.600-4.200-4.800 1.100 1.200-4.800-4.200-2.600 4.200-2.700-1.200-4.800 4.800 1.200z" fill="#fff"/><circle cx="246" cy="895" r="4.600" fill="none" stroke="#ffb005" stroke-width="1.200"/>
          <path d="M938 882l5-2q1 5 7 10 6-4 7-10l5-2v14l-7 3-10-3-7 3z" fill="#fff"/><path d="M950 888q-5-6-5-9a5 5 0 0 1 10 0q0 3-5 9z" fill="#fff" stroke="#1eb98f" stroke-width=".6"/><path d="M945 884v8M955 884v10" stroke="#1eb98f"/>
          <path d="M1648.500 890.500q.5-5 6-5 5.500 0 5.500 4.500 0 3-3.500 4.500-2 1-2 3.500" fill="none" stroke="#fff" stroke-width="4"/><circle cx="1654.500" cy="902.500" r="2.600" fill="#fff"/>
        </svg>
      </div>
    </section>
    <div class="to-top"><svg viewBox="0 0 14 9"><path d="M1 8l6-6 6 6" fill="none" stroke="#fff" stroke-width="2.600"/></svg></div>
  </div>
  <div class="scrollbar"><i class="arrow up"></i><div class="thumb"></div><i class="arrow down"></i></div>
</div>

<footer class="taskbar">
  <div class="start"><svg viewBox="0 0 20 20"><path d="M0 3l8-1.200V9.500H0zM9 1.600L20 0v9.500H9zM0 10.500h8v7.700L0 17zM9 10.500h11V20L9 18.400z" fill="#fff"/></svg></div>
  <div class="search"><svg viewBox="0 0 20 20"><circle cx="12.500" cy="7.500" r="6.300" fill="none" stroke="#ddd" stroke-width="1.500"/><path d="M8 12l-7 7" stroke="#ddd" stroke-width="1.500"/></svg><span>Type here to search</span></div>
  <div class="apps">
    <div class="app"><svg viewBox="0 0 28 28"><circle cx="14" cy="14" r="9" fill="none" stroke="#fff" stroke-width="2.300"/></svg></div>
    <div class="app"><svg viewBox="0 0 28 28"><path d="M0 3h9l2 3h16v19H0z" fill="#f8d56b"/><path d="M0 9h27v15H0z" fill="#fdd65c"/><path d="M4 25v-9h19v9h-5v-4h-9v4z" fill="#3c9be0"/></svg></div>
    <div class="app"><svg viewBox="0 0 28 28"><circle cx="14" cy="14" r="14" fill="#1b7fd0"/><path d="M2 10Q6 0 15 0q13 1 13 13-2 7-10 6-2-2 0-4 0-7-8-8-5 0-8 3z" fill="#4bd191"/><path d="M11 9q-9 6-3 13 8 8 17 0-7 4-13-2-4-5 0-11z" fill="#0c4f9e"/></svg></div>
    <div class="app mail"><svg viewBox="0 0 28 28"><path d="M0 10L14 0l14 10v16H0z" fill="#0f5fa8"/><path d="M4 8h20v10H4z" fill="#fff"/><path d="M0 10l14 9 14-9v16H0z" fill="#2a9ae8"/></svg><b>4</b></div>
    <div class="app"><svg viewBox="0 0 28 28"><path d="M0 0h28v28H0z" fill="#000"/><text x="14" y="14" text-anchor="middle" font-size="13" font-weight="900" fill="#eee" textLength="24" lengthAdjust="spacingAndGlyphs">PUBG</text><text x="14" y="24" text-anchor="middle" font-size="8" font-weight="700" fill="#bbb" textLength="22">LITE</text></svg></div>
    <div class="app"><svg viewBox="0 0 28 28"><ellipse cx="14" cy="14" rx="11" ry="11.500" fill="none" stroke="#e81224" stroke-width="5.500"/></svg></div>
    <div class="app"><svg viewBox="0 0 28 28"><circle cx="14" cy="15" r="12.500" fill="#1c8fe8"/><path d="M2 14Q3 4 8 2l1 5 5-5q1 4 4 5l5-4q6 11 1 18-9 8-18 2z" fill="#35b4f5"/><path d="M9 11q5-3 9 1 2 6-3 8-6 1-8-4 3 2 5 0z" fill="#1467c8"/></svg></div>
    <div class="app"><svg viewBox="0 0 28 28"><path d="M3 3h17v20H3z" fill="#cfe5f5"/><path d="M6 5h19v20H6z" fill="#59a6dd"/><circle cx="15" cy="15" r="8" fill="#f18a21"/><path d="M12.500 10.500l7 4.500-7 4.500z" fill="#fff"/></svg></div>
    <div class="app"><svg viewBox="0 0 28 28"><path d="M4 2h20q2 0 2 2v24l-6-5H4q-2 0-2-2V4q0-2 2-2z" fill="#7287d8"/><path d="M7 17q0-7 3-8h8q3 1 3 8l-4 2-2-2h-2l-2 2z" fill="#fff"/><circle cx="11.500" cy="14" r="1.700" fill="#7287d8"/><circle cx="16.500" cy="14" r="1.700" fill="#7287d8"/></svg></div>
    <div class="app"><svg viewBox="0 0 28 28"><path d="M9 7q0-6 5-6t5 6" fill="none" stroke="#fff" stroke-width="2"/><path d="M1 6h26v21H1z" fill="#fff"/><path d="M8 11h5.500v5.500H8z" fill="#f25022"/><path d="M14.500 11H20v5.500h-5.500z" fill="#7fba00"/><path d="M8 17.500h5.500V23H8z" fill="#00a4ef"/><path d="M14.500 17.500H20V23h-5.500z" fill="#ffb900"/></svg></div>
    <div class="app current"><svg><use href="#chrome"/></svg></div>
    <div class="app"><svg viewBox="0 0 28 28"><ellipse cx="13" cy="9" rx="12" ry="8" fill="#e8edf2" stroke="#c33" stroke-width="1.500" stroke-dasharray="4 3"/><path d="M6 26L20 8M25 22L6 12" stroke="#9aa" stroke-width="2.500"/><circle cx="6" cy="24" r="3.500" fill="none" stroke="#d33" stroke-width="2.500"/><circle cx="22" cy="23" r="4" fill="none" stroke="#2a80c8" stroke-width="2.500"/></svg></div>
    <div class="app"><svg viewBox="0 0 28 28"><path d="M0 3h28v22H0z" fill="#ccc"/><path d="M1 6h26v18H1z" fill="#050505"/><path d="M4 9h3M4 12h6M9 9h3" stroke="#eee" stroke-width="1.300"/></svg></div>
    <div class="app"><svg viewBox="0 0 28 28"><path d="M8 1h19v26H8z" fill="#b44bd8"/><path d="M21 8h6v13h-6z" fill="#7d2bb0"/><path d="M0 7h15v15H0z" fill="#7719aa"/><path d="M4.500 18v-7l6 7v-7" fill="none" stroke="#fff" stroke-width="2"/></svg></div>
    <div class="app running"><svg viewBox="0 0 28 28"><path d="M20 0l8 3v22l-8 3L7 16l-4 3-3-2V11l3-2 4 3zM20 8l-7 6 7 6z" fill="#2298e8" fill-rule="evenodd"/></svg></div>
  </div>
  <div class="tray">
    <svg viewBox="0 0 18 18"><path d="M2 12l7-7 7 7" fill="none" stroke="#fff" stroke-width="1.500"/></svg>
    <svg viewBox="0 0 20 18"><path d="M1 6h3l4-4v14l-4-4H1zM10.500 6q2 3 0 6M13.500 4q4 5 0 10M16.500 2q5 7 0 14" fill="none" stroke="#fff" stroke-width="1.300"/></svg>
    <svg viewBox="0 0 20 18"><path d="M6 5h13v9H4M8 7h9v5H8z" fill="none" stroke="#fff" stroke-width="1.300"/><path d="M9 8h5v3H9z" fill="#fff"/><path d="M1 3v3q3 2 5 0V3M3.500 7v8" fill="none" stroke="#fff" stroke-width="1.500"/></svg>
    <svg viewBox="0 0 18 18"><path d="M2 17Q3 4 17 2M6 17Q7 9 17 7M10 17Q11 13 17 12" fill="none" stroke="#ccc" stroke-width="1.400"/><circle cx="15" cy="16" r="1.500" fill="#fff"/></svg>
    <p>ENG<br>US</p>
    <p>1:22 PM<br>8/29/2020</p>
    <div class="notice"><svg viewBox="0 0 20 20"><path d="M0 0h20v16h-4l-4 4v-4H0z" fill="#fff"/><path d="M4 5h12M4 8.500h12M4 12h7" stroke="#1c2733" stroke-width="1.400"/></svg><b>7</b></div>
  </div>
</footer>
<script src="app.js"></script>
</body>
</html>
```

FILE: styles.css
```css
* { box-sizing: border-box; }
body { margin: 0; width: 1920px; height: 1080px; overflow: hidden; display: flex; flex-direction: column; background: #fff; font-family: "Open Sans", "Noto Sans", sans-serif; color: #fff; }
p, h1 { margin: 0; }
svg { display: block; flex: none; }
.sprite { position: absolute; width: 0; height: 0; }

.tabs { height: 42px; background: #000; display: grid; grid-template-columns: repeat(17, 58.65px) repeat(11, 57.5px) 55px 1fr; padding-left: 11.5px; align-items: center; flex: none; }
.tab { height: 24px; border-right: 1px solid #555; display: flex; align-items: center; gap: 9px; padding-left: 8px; font-size: 15px; }
.tab svg { width: 20px; height: 20px; }
.tab span { width: 12px; overflow: hidden; white-space: nowrap; -webkit-mask-image: linear-gradient(90deg, #000 65%, transparent); letter-spacing: -.8px; }
.tab.sound { padding-left: 9px; }
.tab.sound svg { width: 14px; height: 14px; }
.tab.sound span { width: 13px; }
.tab.active { height: 42px; background: #2d2d2d; border: 0; border-radius: 10px 10px 0 0; gap: 8px; padding-left: 9px; }
.tab.active svg { width: 13px; height: 13px; }
.tab.active span { width: 14px; }
.fav { width: 20px; height: 20px; flex: none; display: flex; align-items: center; justify-content: center; }
.medium { background: #121212; font: 900 17px "Liberation Serif", serif; }
.dev { background: #0c0d10; font: 700 11px "Liberation Sans", sans-serif; letter-spacing: -.8px; }
.new-tab { padding-left: 20px; }
.new-tab svg { width: 15px; height: 15px; }
.window-buttons { display: flex; justify-content: flex-end; gap: 43px; padding: 0 22px 6px 0; }
.window-buttons svg { width: 14px; height: 14px; }

.toolbar { height: 43px; background: #2d2d2d; display: flex; align-items: center; padding-top: 2px; flex: none; }
.nav-buttons { width: 135px; display: flex; gap: 23px; padding-left: 19px; }
.nav-buttons svg { width: 17px; height: 17px; }
.omnibox { width: 1210px; height: 35px; border-radius: 18px; background: #404040; display: flex; align-items: center; padding-left: 17px; }
.lock { width: 11px; height: 15px; }
.url { margin-left: 14px; flex: 1; font-size: 17.250px; letter-spacing: -.24px; line-height: 30px; white-space: nowrap; }
.url span { color: #a8a8a8; }
.omni-actions { display: flex; gap: 22px; padding-right: 14px; }
.omni-actions svg { width: 18px; height: 18px; }
.extensions { display: flex; gap: 20.050px; padding-left: 17px; align-items: center; }
.extensions svg { width: 20px; height: 20px; }
.extensions .avatar { width: 24px; height: 24px; margin: 0 -2px; }
.ext-badge { position: relative; }
.ext-badge b { position: absolute; left: 12px; top: 12px; width: 15px; height: 15px; border-radius: 2px; background: #5f6368; font-size: 12px; line-height: 15px; text-align: center; }

.bookmarks { height: 44px; background: #2d2d2d; border-bottom: 3px solid #202124; display: grid; grid-template-columns: 82.500px 128.500px 126px 153px 139.500px 107.500px 192px 193px 193px 386.500px 22.500px 1fr; padding: 0 0 1px 19px; align-items: center; flex: none; }
.bookmark { display: flex; align-items: center; gap: 9.500px; font-size: 14.600px; letter-spacing: -.28px; white-space: nowrap; }
.bookmark svg { width: 20px; height: 20px; }
.bookmark:first-child svg { width: 17px; height: 18px; }
.bookmark:first-child { gap: 12px; }
.bookmark.more { font-size: 17px; }
.rainbow { background: linear-gradient(135deg, #ff4d6d, #b04df0 25%, #35d2f0 45%, #5ff05a 65%, #ffd84d 85%, #ff6a4d); }
.gfonts { border-radius: 50%; background: #1a73e8; font-size: 13px; }
.bookmark.other { border-left: 1px solid #555; padding-left: 15px; gap: 12px; height: 24px; }
.bookmark.other svg { width: 16px; height: 18px; }

.viewport { flex: 1; display: flex; overflow: hidden; }
.page { flex: 1; position: relative; display: flex; flex-direction: column; background: #fff; overflow: hidden; }
.navbar { height: 80px; flex: none; position: relative; z-index: 5; background: #fff; display: flex; align-items: center; padding-left: 153px; box-shadow: 0 2px 5px rgba(0,0,0,.3), 0 5px 10px rgba(0,0,0,.25); }
.virus { width: 54px; height: 54px; }
.navbar h1 { width: 1444px; padding: 0 0 1px 3px; font: 700 30px "Liberation Sans", Arial, sans-serif; color: #212121; }
.navbar h1 span { color: #f00; }
.moon { width: 19px; height: 25px; margin-right: 38px; }
.menu { width: 23px; height: 17px; }
.charts { display: flex; gap: 4px; padding-left: 180px; position: relative; z-index: 1; }
.card, .map-card { box-shadow: 0 14px 19px -9px rgba(0,0,0,.2), 0 30px 48px 4px rgba(0,0,0,.14), 0 11px 58px 10px rgba(0,0,0,.12); background: #fff; }
.card { width: 768px; height: 194px; border-radius: 0 0 5px 5px; font: 15px "Liberation Sans", Arial, sans-serif; }
.card text { fill: #666; }
.grid { stroke: rgba(0,0,0,.11); stroke-width: 1.300; }
.map-card { margin: 38px 0 0 180px; width: 1540px; height: 541px; border-radius: 5px; padding: 8px; flex: none; }
.embed { position: relative; z-index: 2; width: 1524px; height: 525px; border: 3px solid #202020; border-radius: 9px; overflow: hidden; background: linear-gradient(#777 70%, #ddd); padding: 1px; }
.map { width: 1516px; height: 517px; border-radius: 6px; }
.land path { stroke: #52575c; stroke-width: 1; vector-effect: non-scaling-stroke; stroke-linejoin: round; }
.land .c1 { fill: #60202b; }
.land .c2 { fill: #5b262f; }
.land .c3 { fill: #552932; }
.land .c4 { fill: #4e2b35; }
.land .c5 { fill: #432e39; }
.land .c6 { fill: #222d3f; }
.land .sea { fill: #23282b; }
.land .hot { fill: #841c24; stroke: none; }
.land .line { fill: none; }
.land .ridge { stroke: #4f1a1b; }
#labels { font-family: Roboto, sans-serif; fill: #8e533f; text-anchor: middle; font-weight: 500; }
#labels .sea-name { fill: #565c63; font-weight: 400; }
#markers text { font: 700 18.750px "Liberation Sans", Arial, sans-serif; fill: rgba(255,255,255,.85); text-anchor: middle; }
.brand text { font: 24.500px "Noto Sans", "Open Sans", sans-serif; fill: #fff; letter-spacing: -.45px; }
.fabs circle { filter: drop-shadow(0 2px 4px rgba(0,0,0,.3)); }
.to-top { position: absolute; z-index: 6; left: 1829px; top: 833px; width: 50px; height: 50px; border-radius: 50%; background: #f50057; display: flex; align-items: center; justify-content: center; box-shadow: 0 4px 8px rgba(0,0,0,.35), 0 1px 18px rgba(0,0,0,.15); }
.to-top svg { width: 15px; height: 10px; }
.scrollbar { width: 21px; background: #f1f1f1; display: flex; flex-direction: column; align-items: center; padding: 9px 0 6px; }
.thumb { width: 17px; height: 496px; background: #c1c1c1; margin-top: auto; margin-bottom: 7px; }
.arrow { border: 5px solid transparent; }
.arrow.up { border-top: 0; border-bottom-color: #505050; }
.arrow.down { border-bottom: 0; border-top-color: #a3a3a3; }

.taskbar { height: 50px; flex: none; background: #1c2733; display: flex; align-items: stretch; }
.start { width: 60px; display: flex; align-items: center; justify-content: center; }
.start svg { width: 21px; height: 21px; }
.search { width: 430px; background: #333; border: 1px solid #555; display: flex; align-items: center; gap: 15px; padding-left: 14px; font-size: 18px; letter-spacing: -.35px; color: #c4c4c4; }
.search svg { width: 20px; height: 20px; }
.apps { display: flex; flex: 1; }
.app { width: 62.100px; display: flex; align-items: center; justify-content: center; position: relative; }
.app svg { width: 28px; height: 28px; }
.current { background: #46525d; }
.current, .running { border-bottom: 3px solid #76b9ed; padding-top: 3px; }
.running { width: 50px; margin-left: 6px; }
.app b, .notice b { position: absolute; border-radius: 50%; background: #3a3f45; border: 1px solid #b5b5b5; width: 20px; height: 20px; line-height: 18px; text-align: center; font-size: 14px; left: 36px; top: 24px; }
.tray { display: flex; align-items: center; width: 310px; }
.tray > svg { width: 19px; height: 19px; margin-right: 11.500px; }
.tray p { font-size: 14.400px; letter-spacing: -.4px; line-height: 22px; text-align: center; margin-left: 2px; }
.tray p + p { margin-left: 15px; }
.notice { position: relative; margin-left: 23px; }
.notice svg { width: 21px; height: 21px; }
.notice b { left: 9px; top: 9px; font-size: 13px; border-color: #777; }
```

FILE: app.js
```js
const f = n => n.toFixed(1);

/* Smooth line through a flat list of x,y pairs */
function curve(p) {
  const slope = j => {
    if (j < 2 || j > p.length - 4) return 0;
    const a = (p[j + 1] - p[j - 1]) / (p[j] - p[j - 2] || 1);
    const b = (p[j + 3] - p[j + 1]) / (p[j + 2] - p[j] || 1);
    return a * b <= 0 ? 0 : 2 * a * b / (a + b);
  };
  let d = `M${p[0]} ${p[1]}`;
  for (let i = 2; i < p.length; i += 2) {
    const w = (p[i] - p[i - 2]) / 2.6;
    d += `C${f(p[i - 2] + w)} ${f(p[i - 1] + w * slope(i - 2))} ${f(p[i] - w)} ${f(p[i + 1] - w * slope(i))} ${p[i]} ${p[i + 1]}`;
  }
  return d;
}
const poly = p => 'M' + p.join(' ');
const tick = (t, x, y) => `<text text-anchor="end" transform="translate(${f(x)} ${y}) rotate(-48.5)">${t}</text>`;
const grid = (x0, x1, ax, ys) => `<path class="grid" fill="none" d="M${ax} 200V${ys[0]}${ys.map(y => `M${x0} ${y}H${x1}`).join('')}"/>`;
const names = ['Jan', 'Feb', 'Mar', 'Apr', 'May', 'Jun', 'Jul', 'Aug'];

const cases = poly([243.3,322.8, 340,322.2, 380,322, 405,321.2, 420,319.8, 432,318.3, 443,316.2, 455,313, 465,310, 475,306.8, 490,302, 507,296.5, 533,289, 560,281.5, 590,273.3, 615,266.3, 640,259, 665,250, 690,239.5, 705,233, 725,222.5, 735,216.5, 748,208, 790,180, 935,80]);
const deaths = poly([243.3,323.3, 440,323.2, 480,322.3, 560,320.3, 640,319, 720,317.7, 800,316.5, 880,314.8, 935,313.8]);
let t = grid(232, 935, 243.3, [323.3, 268.7, 214]) +
  `<path d="${cases}V323.300H243.300z" fill="rgba(255,155,0,.5)"/><path d="${deaths}V323.300H243.300z" fill="rgba(255,90,0,.35)"/>` +
  `<path d="${deaths}" fill="none" stroke="#ff4d00" stroke-width="3.600"/><path d="${cases}" fill="none" stroke="#ffa00a" stroke-width="3.600" stroke-linejoin="round"/>` +
  ['0', '5m', '10m'].map((v, i) => `<text text-anchor="end" x="230" y="${328 - i * 54.700}">${v}</text>`).join('');
for (let i = 0; i < 25; i++) t += tick(new Date(Date.UTC(2020, 0, 22 + 9 * i)).toISOString().slice(0, 10), 245.5 + i * 28.450, 340);
document.getElementById('totals').innerHTML = t;

const raw = [105,567,122,583,133,570,143,538,152,543,162,535,173,555,185,588,193,580,202,557,210,555,219,517,237,523,248,580,258,543,275,502,292,488,303,492,313,525,323,552,335,530,343,500,352,450,362,445,371,392,379,470,390,525,400,445,409,457,418,430,430,415,438,398,447,465,457,505,467,435,485,392,495,422,503,400,513,402,524,452,533,382,545,380,552,390,563,262,575,350,582,425,592,395,600,310,612,290,622,265,630,230,642,280,656,342,664,315,672,240,680,180,700,180,712,240,724,312,731,240,740,100,1230,90];
const day = curve(raw.map((v, i) => +f(i % 2 ? 125 + v / 3 : 940 + v / 1.6)));
t = grid(994, 1708.7, 1005.6, [346.3, 295.7, 244.3]) +
  `<path d="${day}V346.300H1005.600z" fill="rgba(28,186,232,.5)"/><path d="${day}" fill="none" stroke="#a31fe0" stroke-width="3.600"/>` +
  ['50k', '100k', '150k'].map((v, i) => `<text text-anchor="end" x="992.500" y="${350 - i * 51}">${v}</text>`).join('');
for (let i = 0; i < 30; i++) { const d = new Date(Date.UTC(2020, 4, 2 + 4 * i)); t += tick(names[d.getUTCMonth()] + ' ' + d.getUTCDate(), 1007.5 + i * 23.850, 363); }
document.getElementById('daily').innerHTML = t;

let s = '';
for (let a = 0; a < 360; a += 24) s += `<path transform="rotate(${a})" d="M-1.500 -19V-23L-4 -24.500 -3 -26.500H3L4 -24.500 1.500 -23V-19z"/>`;
document.getElementById('spikes').innerHTML = s;

/* Country and sea names: x, y, text, size */
const land = [[1429,542,'Kazakhstan',14.5],[1406,605,'Uzbekistan',14],[1371,634,'Turkmenistan',14.5],[1413,679,'Afghanistan',14.5],[1444,711,'Pakistan',14.5],[1548,725,'Nepal',12],[1517,768,'India',14.5],[1683,557,'Mongolia',14.5],[1481,610,'Kyrgyzstan',12],[1337,694,'Iran',14.5],[1256,687,'Iraq',14.5],[1227,666,'Syria',12.5],[1203,634,'Turkey',15],[1111,629,'Greece',14.5],[1127,567,'Romania',15],[1051,542,'Austria',12.5],[967,560,'France',14.5],[1083,490,'Poland',15],[1150,477,'Belarus',15],[1174,526,'Ukraine',14],[1020,505,'Germany',13],[946,460,'United',14.5],[946,473,'Kingdom',14.5],[1021,453,'Denmark',12.5],[1037,593,'Italy',14.5],[929,613,'Spain',14.5],[888,641,'Portugal',14.5],[1019,676,'Tunisia',12.5],[905,696,'Morocco',14.5],[969,727,'Algeria',14.5],[1074,735,'Libya',14.5],[1160,735,'Egypt',14.5],[857,749,'Western',12],[856,760,'Sahara',12],[871,798,'Mauritania',14.5],[937,807,'Mali',14.5],[1017,809,'Niger',14.5],[1084,828,'Chad',14.5],[1166,818,'Sudan',14.5],[940,841,'Burkina',12],[873,860,'Guinea',12],[1008,867,'Nigeria',14],[1163,882,'South Sudan',14.5],[1232,874,'Ethiopia',14.5],[1221,932,'Kenya',14.5],[1271,915,'Somalia',14.5],[1033,940,'Gabon',12.5],[1118,955,'DRC',14.5],[1289,821,'Yemen',14.5],[1350,785,'Oman',12.5],[1269,763,'Saudi',14.5],[1638,773,'Mvanmar',14.5],[1638,785,'(Burma)',14.5],[1669,816,'Thailand',14.5],[1708,908,'Malaysia',14.5],[221,760,'Mexico',14.5],[388,778,'Cuba',12.5],[307,820,'Guatemala',12.5],[356,847,'Nicaragua',12.5],[476,790,'Puerto Rico',12],[478,874,'Venezuela',14.5],[431,908,'Colombia',15],[535,889,'Guyana',12.5],[555,907,'Suriname',12.5],[515,924,'RR',12],[582,925,'AP',12],[388,946,'Ecuador',12],[669,970,'CE',12],[230,626,'United States',14.5],[333,506,'ON',12.5],[430,508,'QC',12.5],[515,477,'NL',12.5],[479,556,'NB',12],[504,564,'PE',11.5],[498,579,'NS',12],[461,577,'ME',11],[243,610,'NE',12],[285,605,'IA',12],[313,615,'IL',12],[361,619,'OH',12],[398,616,'PA',12],[338,621,'IN',12],[397,627,'MD',11],[414,634,'DE',11],[200,639,'CO',12],[253,639,'KS',12],[292,640,'MO',12],[374,639,'WV',12],[399,648,'VA',12],[259,665,'OK',12],[292,666,'AR',12],[390,664,'NC',12],[196,675,'NM',12],[378,681,'SC',12],[312,684,'MS',12],[333,688,'AL',12],[360,695,'GA',12],[297,708,'LA',12],[198,473,'SK',12],[259,450,'MB',12],[1727,845,'Vietnam',14],[235,582,'SD',12]];
const sea = [[661,655,'North',15,2.5],[661,672,'Atlantic',15,2.5],[661,688,'Ocean',15,2.5],[310,742,'Gulf of',13.5],[310,755,'Mexico',13.5],[417,831,'Caribbean Sea',13.5],[1408,847,'Arabian Sea',13],[1573,838,'Bay of Bengal',13],[1505,890,'Laccadive Sea',13],[1292,845,'Gulf of Aden',13],[1674,860,'Gulf of',13],[1674,871,'Thailand',13],[985,909,'Gulf of Guinea',13]];
document.getElementById('labels').innerHTML =
  land.map(([x, y, n, z]) => `<text x="${x}" y="${y + 5}" font-size="${z}">${n}</text>`).join('') +
  sea.map(([x, y, n, z, g]) => `<text class="sea-name" x="${x}" y="${y + 5}" font-size="${z}" letter-spacing="${g || 0}">${n}</text>`).join('');

/* Case clusters: x, y, count */
const pins = [[251.3,555,376],[327.3,577.3,321],[441.3,601,343],[330,652.5,1156],[235,695,487],[364,733.5,159],[247.8,789,26],[475,802,82],[446,884,25],[377.5,960,3],[477.8,960,70],[616.3,945.5,389],[718.8,960.7,7],[885,485,68],[991.4,512.4,693],[994,590,32],[891,599,20],[969,657,50],[1045,641,12],[1173,506,34],[1270,525,19],[1284,604,24],[1294,680,9],[1382.5,471,2],[1471.3,464,3],[1571.3,467,5],[1584,595,5],[1490,628.5,2],[1690,661,22],[1704.5,741,41],[891,729.5,3],[1010,738.5,2],[1204,732,45],[1281.5,753.5,238],[1380,729.5,5],[994,847,37]];
document.getElementById('markers').innerHTML = pins.map(([x, y, n]) => {
  const [c, r] = n > 99 ? ['#ff6a6a', 31.5] : n > 9 ? ['#ff9b00', 25] : ['#00a0d6', 19];
  const ring = n > 99 ? '' : `<circle cx="${x}" cy="${y}" r="31.300" fill="${c}" opacity=".22"/>`;
  return `<circle cx="${x}" cy="${y}" r="37.500" fill="${c}" opacity=".22"/>${ring}<circle cx="${x}" cy="${y}" r="${r}" fill="${c}"/><text x="${x}" y="${y + 5.8}">${n}</text>`;
}).join('');
```
